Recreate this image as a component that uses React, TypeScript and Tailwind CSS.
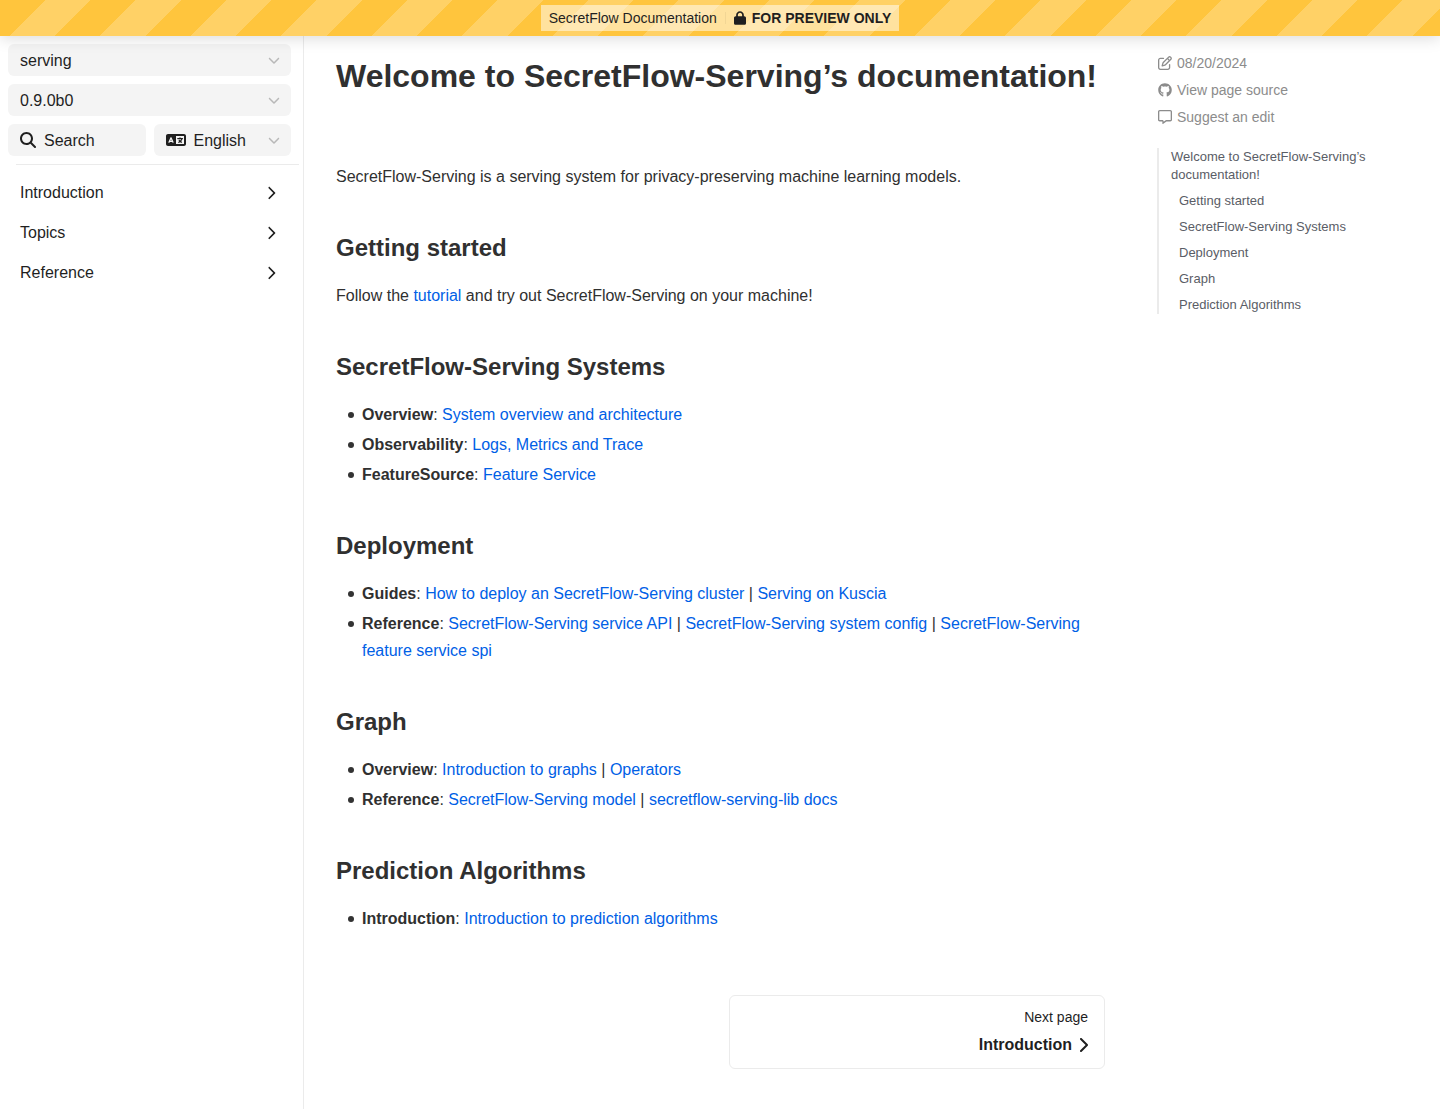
import { Fragment, type ReactNode } from "react";
import {
  FaChevronDown,
  FaChevronRight,
  FaGithub,
  FaLanguage,
  FaLock,
  FaMagnifyingGlass,
  FaRegMessage,
  FaRegPenToSquare,
} from "react-icons/fa6";

type Entry = { label: string; links: string[] };
type Section = { title: string; entries: Entry[] };

const navItems = ["Introduction", "Topics", "Reference"];

const sections: Section[] = [
  {
    title: "SecretFlow-Serving Systems",
    entries: [
      { label: "Overview", links: ["System overview and architecture"] },
      { label: "Observability", links: ["Logs, Metrics and Trace"] },
      { label: "FeatureSource", links: ["Feature Service"] },
    ],
  },
  {
    title: "Deployment",
    entries: [
      {
        label: "Guides",
        links: ["How to deploy an SecretFlow-Serving cluster", "Serving on Kuscia"],
      },
      {
        label: "Reference",
        links: [
          "SecretFlow-Serving service API",
          "SecretFlow-Serving system config",
          "SecretFlow-Serving feature service spi",
        ],
      },
    ],
  },
  {
    title: "Graph",
    entries: [
      { label: "Overview", links: ["Introduction to graphs", "Operators"] },
      { label: "Reference", links: ["SecretFlow-Serving model", "secretflow-serving-lib docs"] },
    ],
  },
  {
    title: "Prediction Algorithms",
    entries: [{ label: "Introduction", links: ["Introduction to prediction algorithms"] }],
  },
];

const tocItems = [
  "Getting started",
  "SecretFlow-Serving Systems",
  "Deployment",
  "Graph",
  "Prediction Algorithms",
];

function Banner() {
  return (
    <header className="relative z-10 flex h-9 items-center justify-center bg-[repeating-linear-gradient(135deg,#ffc53d_0_32px,#ffd166_32px_64px)] shadow-[0_2px_16px_rgba(0,0,0,0.15)]">
      <div className="flex h-[26px] items-center bg-white/50 px-2 text-sm text-[#1f1f1f]">
        <span>SecretFlow Documentation</span>
        <span className="mx-2 h-3 w-px bg-black/5" />
        <FaLock className="mr-1.5 h-[14px] w-3" />
        <strong>FOR PREVIEW ONLY</strong>
      </div>
    </header>
  );
}

function Picker({ label, value, icon }: { label: string; value: string; icon?: ReactNode }) {
  return (
    <div className="relative flex h-8 min-w-0 items-center rounded-md bg-[#f4f4f4]">
      {icon && <span className="pointer-events-none absolute left-3">{icon}</span>}
      <select
        aria-label={label}
        className={
          icon
            ? "h-8 w-full appearance-none bg-transparent pt-0.5 pr-8 pl-10 text-base"
            : "h-8 w-full appearance-none bg-transparent px-3 pt-0.5 text-base"
        }
      >
        <option>{value}</option>
      </select>
      <FaChevronDown className="pointer-events-none absolute right-[11px] size-3 text-[#b8b8b8]" />
    </div>
  );
}

function Sidebar() {
  return (
    <aside className="w-76 shrink-0 border-r border-[#ebebeb] text-[#1f1f1f]">
      <div className="flex flex-col gap-2 pt-2 pr-3 pl-2">
        <Picker label="Project" value="serving" />
        <Picker label="Version" value="0.9.0b0" />
        <div className="grid grid-cols-2 gap-2">
          <button className="flex h-8 items-center gap-2 rounded-md bg-[#f4f4f4] px-3">
            <FaMagnifyingGlass className="size-4" />
            <span className="pt-0.5">Search</span>
          </button>
          <Picker label="Language" value="English" icon={<FaLanguage className="size-5" />} />
        </div>
      </div>
      <hr className="mt-2 mr-1 ml-4 border-[#ebebeb]" />
      <nav className="mt-2 flex flex-col">
        {navItems.map((item) => (
          <a key={item} href="#" className="flex h-10 items-center justify-between pr-[25px] pl-5">
            {item}
            <FaChevronRight className="size-[14px]" />
          </a>
        ))}
      </nav>
    </aside>
  );
}

function Heading({ children }: { children: ReactNode }) {
  return <h2 className="mt-10 mb-4 text-2xl leading-9 font-bold">{children}</h2>;
}

function TextLink({ children }: { children: ReactNode }) {
  return (
    <a href="#" className="text-[#0060e6]">
      {children}
    </a>
  );
}

function Article() {
  return (
    <main className="min-w-0 flex-1 pt-4 leading-[27px]">
      <h1 className="text-[32px] leading-12 font-bold">
        Welcome to SecretFlow-Serving’s documentation!
      </h1>
      <p className="mt-16 leading-[26px]">
        SecretFlow-Serving is a serving system for privacy-preserving machine learning models.
      </p>
      <Heading>Getting started</Heading>
      <p>
        Follow the <TextLink>tutorial</TextLink> and try out SecretFlow-Serving on your machine!
      </p>
      {sections.map((section) => (
        <section key={section.title}>
          <Heading>{section.title}</Heading>
          <ul className="flex flex-col gap-[3px] pl-[26px]">
            {section.entries.map((entry) => (
              <li
                key={entry.label}
                className="relative before:absolute before:top-[11px] before:-left-[14px] before:size-[6px] before:rounded-full before:bg-[#333333]"
              >
                <strong>{entry.label}</strong>:{" "}
                {entry.links.map((link, i) => (
                  <Fragment key={link}>
                    {i > 0 && " | "}
                    <TextLink>{link}</TextLink>
                  </Fragment>
                ))}
              </li>
            ))}
          </ul>
        </section>
      ))}
      <div className="mt-[63px] mb-10 grid grid-cols-2 gap-4">
        <a
          href="#"
          className="col-start-2 flex flex-col items-end rounded-md border border-[#ebebeb] px-4 py-2 text-[#1f1f1f]"
        >
          <span className="text-sm leading-[26px]">Next page</span>
          <span className="flex items-center gap-1.5 leading-[30px] font-bold">
            Introduction
            <FaChevronRight className="h-4 w-[10px]" />
          </span>
        </a>
      </div>
    </main>
  );
}

function PageInfo() {
  return (
    <aside className="w-[251px] shrink-0 pt-[14px]">
      <div className="flex flex-col pl-px text-sm leading-[27px] text-[#8c8c8c]">
        <span className="flex items-center gap-[5px]">
          <FaRegPenToSquare className="mb-0.5 size-[14px]" />
          08/20/2024
        </span>
        <a href="#" className="flex items-center gap-[5px]">
          <FaGithub className="mb-0.5 size-[14px]" />
          View page source
        </a>
        <a href="#" className="flex items-center gap-[5px]">
          <FaRegMessage className="mb-0.5 size-[14px]" />
          Suggest an edit
        </a>
      </div>
      <nav className="mt-[17px] flex flex-col gap-2 border-l-2 border-[#ebebeb] pl-3 text-[13px] leading-[18px] text-[#5a5d66]">
        <a href="#">Welcome to SecretFlow-Serving’s documentation!</a>
        {tocItems.map((item) => (
          <a key={item} href="#" className="pl-2">
            {item}
          </a>
        ))}
      </nav>
    </aside>
  );
}

export default function App() {
  return (
    <div className="flex min-h-screen flex-col bg-white font-['Liberation_Sans',Arial,sans-serif] text-base text-[#303030]">
      <Banner />
      <div className="flex flex-1">
        <Sidebar />
        <div className="flex min-w-0 flex-1 gap-13 px-8">
          <Article />
          <PageInfo />
        </div>
      </div>
    </div>
  );
}
